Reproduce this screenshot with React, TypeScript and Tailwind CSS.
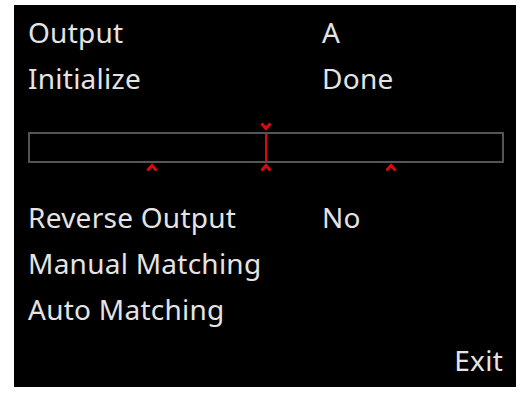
import React from 'react';

const rows = [
  { label: 'Output', value: 'A' },
  { label: 'Initialize', value: 'Done' },
];

const rows2 = [
  { label: 'Reverse Output', value: 'No' },
  { label: 'Manual Matching', value: '' },
  { label: 'Auto Matching', value: '' },
];

function Chevron({ up }: { up?: boolean }) {
  return (
    <svg width="12" height="9" viewBox="0 0 12 9" className="block">
      <polyline
        points={up ? '1.5,7.5 6,2.5 10.5,7.5' : '1.5,1.5 6,6.5 10.5,1.5'}
        fill="none"
        stroke="#dc0a0a"
        strokeWidth="3"
      />
    </svg>
  );
}

function Row({ label, value }: { label: string; value: string }) {
  return (
    <div className="flex h-[46px] items-center leading-[46px]">
      <span className="w-[294px]">{label}</span>
      <span>{value}</span>
    </div>
  );
}

export default function App() {
  return (
    <div className="bg-white w-[530px] h-[396px] pl-[14px] pt-[5px]">
      <div
        className="w-[502px] h-[382px] bg-black text-[#e4e4e4] text-[28px] tracking-[0.25px] pl-[14px] pr-[13px] pt-[4px] flex flex-col"
        style={{ fontFamily: '"Noto Sans", "Open Sans", sans-serif' }}
      >
        {rows.map((r) => (
          <Row key={r.label} {...r} />
        ))}

        <div className="h-[93px] pt-[31px]">
          <div className="relative w-[476px] h-[31px] border-2 border-[#555555]">
            <div className="absolute left-[235px] top-0 bottom-0 w-[2px] bg-[#dc0a0a]" />
            <div className="absolute left-[230px] top-[-12px]">
              <Chevron />
            </div>
            <div className="absolute left-[116px] top-[29px]">
              <Chevron up />
            </div>
            <div className="absolute left-[230px] top-[29px]">
              <Chevron up />
            </div>
            <div className="absolute left-[355px] top-[29px]">
              <Chevron up />
            </div>
          </div>
        </div>

        {rows2.map((r) => (
          <Row key={r.label} {...r} />
        ))}

        <div className="flex justify-end h-[46px] leading-[46px] mt-[5px]">Exit</div>
      </div>
    </div>
  );
}
